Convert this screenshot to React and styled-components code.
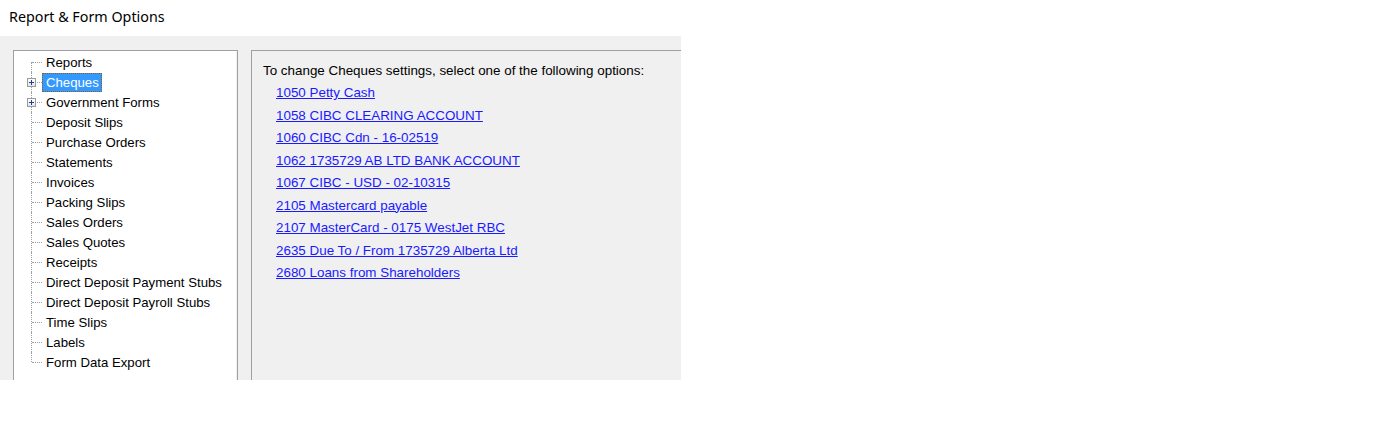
import React from "react";
import styled, { createGlobalStyle } from "styled-components";

const Global = createGlobalStyle`
  html, body { margin: 0; padding: 0; background: #ffffff; }
  body { font-family: "Liberation Sans", Arial, sans-serif; }
`;

const Page = styled.div`
  width: 1395px;
  height: 422px;
  background: #ffffff;
`;

const TitleBar = styled.div`
  height: 36px;
  display: flex;
  align-items: center;
  padding-left: 9px;
  padding-bottom: 3px;
  box-sizing: border-box;
  font-family: "Noto Sans", "Open Sans", sans-serif;
  font-size: 14.3px;
  color: #000;
`;

const Workspace = styled.div`
  width: 681px;
  height: 344px;
  background: #f0f0f0;
  overflow: hidden;
  display: flex;
  align-items: flex-start;
  gap: 13px;
  padding: 14px 0 0 13px;
  box-sizing: border-box;
`;

const TreeBox = styled.div`
  width: 225px;
  height: 360px;
  flex: none;
  box-sizing: border-box;
  background: #ffffff;
  border: 1px solid #a0a0a0;
  box-shadow: inset -1px 0 0 #f0f0f0;
  padding-top: 1px;
`;

const TreeRow = styled.div`
  display: flex;
  align-items: center;
  height: 20px;
  font-size: 13.2px;
  color: #000;
`;

const Connector = styled.span`
  position: relative;
  width: 28px;
  height: 20px;
  flex: none;

  &::before {
    content: "";
    position: absolute;
    left: 17px;
    top: ${(p) => (p.$first ? "10px" : "0")};
    bottom: ${(p) => (p.$last ? "10px" : "0")};
    border-left: 1px dotted #a0a0a0;
  }
  &::after {
    content: "";
    position: absolute;
    left: 18px;
    width: 10px;
    top: 10px;
    border-top: 1px dotted #a0a0a0;
  }
`;

const Expander = styled.span`
  position: absolute;
  left: 13px;
  top: 6px;
  width: 9px;
  height: 9px;
  box-sizing: border-box;
  border: 1px solid #9a9a9a;
  background: linear-gradient(#ffffff, #e4e4e4);
  z-index: 1;

  &::before {
    content: "";
    position: absolute;
    left: 1px;
    right: 1px;
    top: 3px;
    height: 1px;
    background: #1f3f8f;
  }
  &::after {
    content: "";
    position: absolute;
    top: 1px;
    bottom: 1px;
    left: 3px;
    width: 1px;
    background: #1f3f8f;
  }
`;

const Label = styled.span`
  line-height: 17px;
  padding: 0 2px 0 3px;
  border: 1px solid transparent;
  background: ${(p) => (p.$selected ? "#3399ff" : "transparent")};
  color: ${(p) => (p.$selected ? "#ffffff" : "#000000")};
  outline: ${(p) => (p.$selected ? "1px dotted #9a5a10" : "none")};
  outline-offset: -1px;
  white-space: nowrap;
`;

const Panel = styled.div`
  flex: 1;
  height: 360px;
  box-sizing: border-box;
  border-top: 1px solid #a0a0a0;
  border-left: 1px solid #a0a0a0;
  background: #f0f0f0;
  padding: 10px 0 0 11px;
  font-size: 13.4px;
`;

const Heading = styled.div`
  line-height: 20px;
  height: 21px;
  color: #000;
`;

const LinkList = styled.div`
  display: flex;
  flex-direction: column;
  align-items: flex-start;
  padding-left: 13px;
`;

const AccountLink = styled.a`
  line-height: 22.5px;
  color: #1a1aff;
  text-decoration: underline;
  cursor: pointer;
`;

const treeItems = [
  { label: "Reports" },
  { label: "Cheques", expandable: true, selected: true },
  { label: "Government Forms", expandable: true },
  { label: "Deposit Slips" },
  { label: "Purchase Orders" },
  { label: "Statements" },
  { label: "Invoices" },
  { label: "Packing Slips" },
  { label: "Sales Orders" },
  { label: "Sales Quotes" },
  { label: "Receipts" },
  { label: "Direct Deposit Payment Stubs" },
  { label: "Direct Deposit Payroll Stubs" },
  { label: "Time Slips" },
  { label: "Labels" },
  { label: "Form Data Export" },
];

const accounts = [
  "1050 Petty Cash",
  "1058 CIBC CLEARING ACCOUNT",
  "1060 CIBC Cdn - 16-02519",
  "1062 1735729 AB LTD BANK ACCOUNT",
  "1067 CIBC - USD - 02-10315",
  "2105 Mastercard payable",
  "2107 MasterCard - 0175 WestJet RBC",
  "2635 Due To / From 1735729 Alberta Ltd",
  "2680 Loans from Shareholders",
];

export default function App() {
  return (
    <Page>
      <Global />
      <TitleBar>Report &amp; Form Options</TitleBar>
      <Workspace>
        <TreeBox>
          {treeItems.map((item, i) => (
            <TreeRow key={item.label}>
              <Connector $first={i === 0} $last={i === treeItems.length - 1}>
                {item.expandable && <Expander />}
              </Connector>
              <Label $selected={item.selected}>{item.label}</Label>
            </TreeRow>
          ))}
        </TreeBox>
        <Panel>
          <Heading>To change Cheques settings, select one of the following options:</Heading>
          <LinkList>
            {accounts.map((a) => (
              <AccountLink key={a}>{a}</AccountLink>
            ))}
          </LinkList>
        </Panel>
      </Workspace>
    </Page>
  );
}
